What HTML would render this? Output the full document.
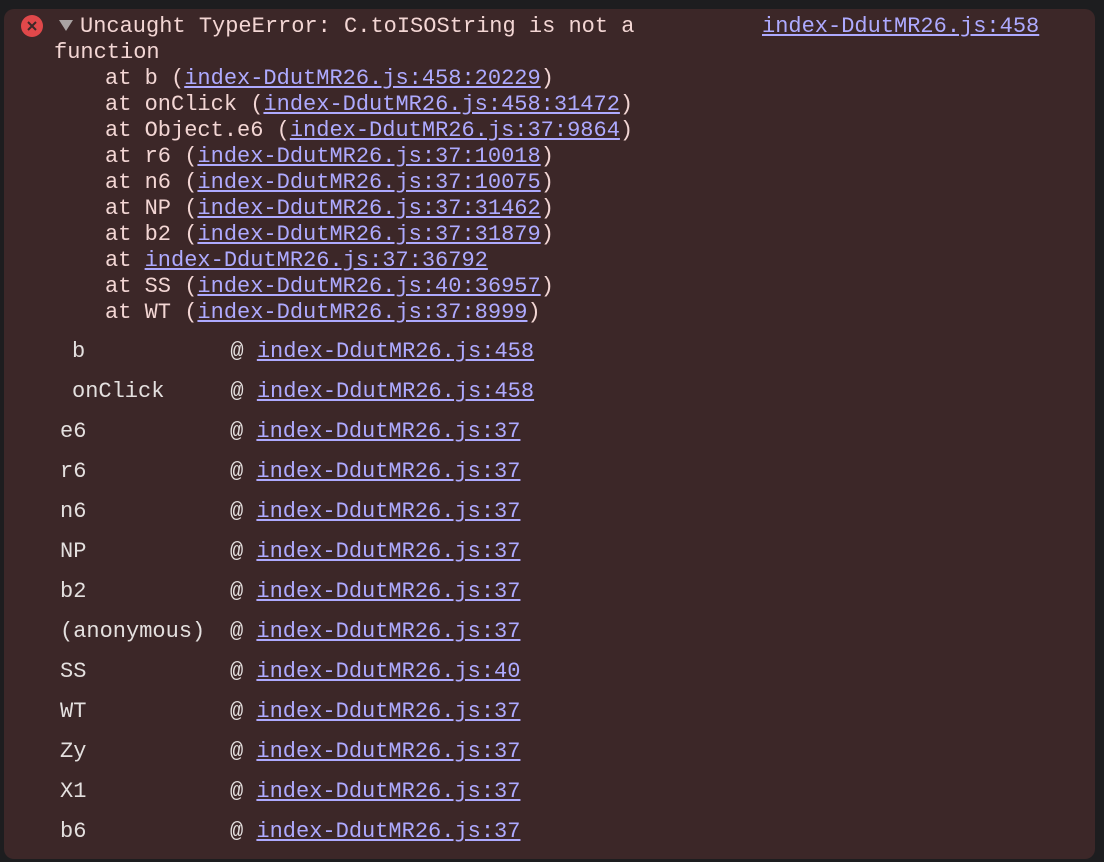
<!DOCTYPE html>
<html><head><meta charset="utf-8"><style>
html,body{margin:0;padding:0;background:#1d1d1f;width:1104px;height:862px;overflow:hidden}
.p{position:absolute;left:4px;top:9px;width:1091px;height:850px;background:#3c2728;border-radius:10px}
.t{position:absolute;font-family:"Liberation Mono",monospace;font-size:22px;line-height:26px;white-space:pre;color:#f3d6d4}
.s{color:#e4e0df}
a{color:#aeaaff;text-decoration:underline;text-underline-offset:2px}
.x{position:absolute;left:21px;top:15px;width:22px;height:22px;border-radius:50%;background:#e0484a}
.tri{position:absolute;left:59px;top:20px;width:0;height:0;border-left:7px solid transparent;border-right:7px solid transparent;border-top:11px solid #a9a3a3}
</style></head><body>
<div class="p"></div>
<div class="x"><svg width="22" height="22"><path d="M7 7L15 15M15 7L7 15" stroke="#3c2728" stroke-width="2"/></svg></div>
<div class="tri"></div>
<div class="t" style="left:80px;top:14px">Uncaught TypeError: C.toISOString is not a</div>
<div class="t" style="left:762px;top:14px"><a>index-DdutMR26.js:458</a></div>
<div class="t" style="left:54px;top:40px">function</div>
<div class="t" style="left:105px;top:66px">at b (<a>index-DdutMR26.js:458:20229</a>)
at onClick (<a>index-DdutMR26.js:458:31472</a>)
at Object.e6 (<a>index-DdutMR26.js:37:9864</a>)
at r6 (<a>index-DdutMR26.js:37:10018</a>)
at n6 (<a>index-DdutMR26.js:37:10075</a>)
at NP (<a>index-DdutMR26.js:37:31462</a>)
at b2 (<a>index-DdutMR26.js:37:31879</a>)
at <a>index-DdutMR26.js:37:36792</a>
at SS (<a>index-DdutMR26.js:40:36957</a>)
at WT (<a>index-DdutMR26.js:37:8999</a>)</div>
<div class="t s" style="left:72px;top:339px">b           @ <a>index-DdutMR26.js:458</a></div>
<div class="t s" style="left:72px;top:379px">onClick     @ <a>index-DdutMR26.js:458</a></div>
<div class="t s" style="left:60px;top:419px">e6</div><div class="t s" style="left:230px;top:419px">@ <a>index-DdutMR26.js:37</a></div>
<div class="t s" style="left:60px;top:459px">r6</div><div class="t s" style="left:230px;top:459px">@ <a>index-DdutMR26.js:37</a></div>
<div class="t s" style="left:60px;top:499px">n6</div><div class="t s" style="left:230px;top:499px">@ <a>index-DdutMR26.js:37</a></div>
<div class="t s" style="left:60px;top:539px">NP</div><div class="t s" style="left:230px;top:539px">@ <a>index-DdutMR26.js:37</a></div>
<div class="t s" style="left:60px;top:579px">b2</div><div class="t s" style="left:230px;top:579px">@ <a>index-DdutMR26.js:37</a></div>
<div class="t s" style="left:60px;top:619px">(anonymous)</div><div class="t s" style="left:230px;top:619px">@ <a>index-DdutMR26.js:37</a></div>
<div class="t s" style="left:60px;top:659px">SS</div><div class="t s" style="left:230px;top:659px">@ <a>index-DdutMR26.js:40</a></div>
<div class="t s" style="left:60px;top:699px">WT</div><div class="t s" style="left:230px;top:699px">@ <a>index-DdutMR26.js:37</a></div>
<div class="t s" style="left:60px;top:739px">Zy</div><div class="t s" style="left:230px;top:739px">@ <a>index-DdutMR26.js:37</a></div>
<div class="t s" style="left:60px;top:779px">X1</div><div class="t s" style="left:230px;top:779px">@ <a>index-DdutMR26.js:37</a></div>
<div class="t s" style="left:60px;top:819px">b6</div><div class="t s" style="left:230px;top:819px">@ <a>index-DdutMR26.js:37</a></div>
</body></html>
